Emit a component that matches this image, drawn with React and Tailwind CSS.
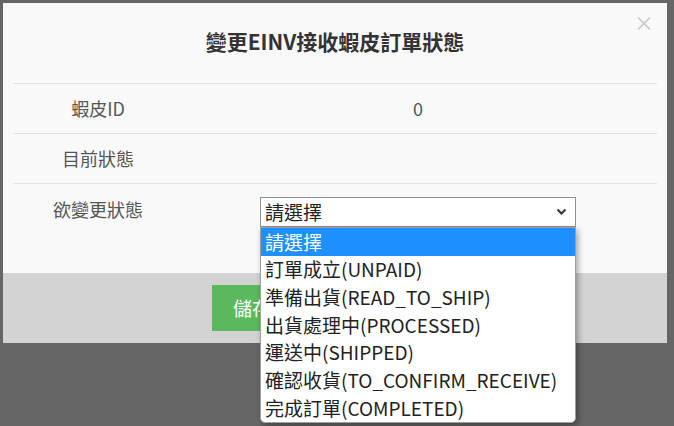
import React from 'react';

const options = [
    '請選擇',
    '訂單成立(UNPAID)',
    '準備出貨(READ_TO_SHIP)',
    '出貨處理中(PROCESSED)',
    '運送中(SHIPPED)',
    '確認收貨(TO_CONFIRM_RECEIVE)',
    '完成訂單(COMPLETED)',
];

const font = { fontFamily: '"Noto Sans CJK TC", "Noto Sans", sans-serif' };

const App = () => {
    return (
        <div className="relative h-[426px] w-[674px] overflow-hidden bg-[#666666] pt-[3px] pl-[3px]" style={font}>
            <div className="w-[664px] bg-[#f9f9f9]">
                {/* header */}
                <div className="relative flex h-[80px] items-center justify-center pb-[2px]">
                    <h4 className="text-[21px] font-bold text-[#333333]">變更EINV接收蝦皮訂單狀態</h4>
                    <span className="absolute right-[13px] top-[10px] text-[20px] leading-none text-[#c8c8c8]">×</span>
                </div>

                {/* body */}
                <div className="px-[10px] text-[18px] text-[#555555]">
                    <div className="flex h-[50px] border-t border-[#e2e2e2]">
                        <div className="flex w-[170px] items-center justify-center">蝦皮ID</div>
                        <div className="flex flex-1 items-center justify-center pr-[4px]">0</div>
                    </div>
                    <div className="flex h-[50px] border-t border-[#e2e2e2]">
                        <div className="flex w-[170px] items-center justify-center">目前狀態</div>
                        <div className="flex-1"></div>
                    </div>
                    <div className="flex h-[90px] border-t border-[#e2e2e2]">
                        <div className="w-[170px] pt-[12px] text-center">欲變更狀態</div>
                        <div className="flex flex-1 justify-center pt-[13px] pr-[4px]">
                            <div className="flex h-[30px] w-[316px] items-center justify-between border border-[#8f8f8f] bg-white pl-[4px] pr-[8px] text-[19px] text-[#222222]">
                                <span>請選擇</span>
                                <svg width="11" height="8" viewBox="0 0 11 8" fill="none">
                                    <path d="M1.5 1.5 L5.5 5.5 L9.5 1.5" stroke="#333" strokeWidth="2" />
                                </svg>
                            </div>
                        </div>
                    </div>
                </div>

                {/* footer */}
                <div className="flex h-[70px] items-start bg-[#d3d3d3] pl-[209px] pt-[12px]">
                    <button className="h-[46px] bg-[#5cb85c] px-[21px] text-[19px] text-white">儲存</button>
                </div>
            </div>

            {/* open select list */}
            <ul className="absolute left-[260px] top-[227px] w-[316px] overflow-hidden rounded-b-[5px] border border-[#a0a0a0] bg-white text-[19px] text-[#222222] shadow-[2px_3px_6px_rgba(0,0,0,0.35)]">
                {options.map((opt, i) => (
                    <li
                        key={opt}
                        className={`flex h-[27.7px] items-center px-[4px] ${i === 0 ? 'bg-[#1e8fff] text-white' : ''}`}
                    >
                        {opt}
                    </li>
                ))}
            </ul>
        </div>
    );
};

export default App;
